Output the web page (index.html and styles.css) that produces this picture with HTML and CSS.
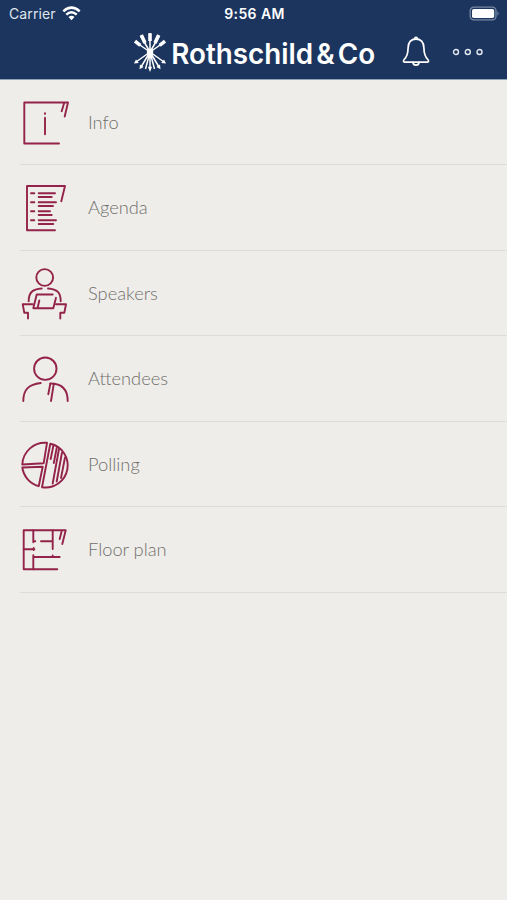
FILE: index.html
```html
<!DOCTYPE html>
<html lang="en">
<head>
    <meta charset="UTF-8">
    <meta name="viewport" content="width=device-width, initial-scale=1.0">
    <title>Rothschild &amp; Co</title>
    <link rel="stylesheet" href="styles.css">
</head>
<body>
    <header>
        <div class="status-bar">
            <div class="carrier">
                <span>Carrier</span>
                <svg class="wifi" width="19" height="15" viewBox="0 0 19 15">
                    <path d="M1.3 5.4Q9.5 -2 17.7 5.4" stroke-width="2.6"/>
                    <path d="M4.3 8.6Q9.5 4 14.7 8.6" stroke-width="2.5"/>
                    <path class="solid" d="M6.5 11Q9.5 8.5 12.5 11L9.5 14.2Z"/>
                </svg>
            </div>
            <span class="time">9:56 AM</span>
            <svg class="battery" width="31" height="16" viewBox="0 0 31 16">
                <rect class="shell" x="1.2" y="1.2" width="25.8" height="12.6" rx="3.6"/>
                <rect class="charge" x="3" y="3" width="22.2" height="9" rx="1.8"/>
                <path class="cap" d="M28.4 5.3Q31 7.5 28.4 9.7Z"/>
            </svg>
        </div>
        <div class="nav-bar">
            <svg class="logo" width="256" height="46" viewBox="0 0 256 46">
                <g class="arrows">
                    <path d="M18 23L3.5 13M18 23L9 7.5M18 23V4M18 23L27 7.5M18 23L32.5 13"/>
                    <path d="M18 23L4 33M18 23L9 38M18 23L13.5 40M18 23V41M18 23L22.5 40M18 23L27 38M18 23L32 33"/>
                    <path class="feather" d="M8.3 16.3L3 12.2M13 14L9.3 6M18 12V4.3M23 14L26.7 6M27.7 16.3L33 12.2"/>
                    <path class="tip" d="M2 34.6L4 30.4L6.8 34ZM7.5 40.2L8 35.4L11.6 38ZM15.9 37.8L18 43L20.1 37.8ZM28.5 40.2L28 35.4L24.4 38ZM34 34.6L32 30.4L29.2 34Z"/>
                    <circle class="tip" cx="18" cy="23" r="3.2"/>
                </g>
                <text x="39.2" y="35.2" textLength="204" lengthAdjust="spacingAndGlyphs">Rothschild &amp; Co</text>
            </svg>
            <svg class="bell" width="28" height="32" viewBox="0 0 28 32">
                <path d="M14 3.2C8.6 3.2 6.2 7.2 6.1 12C6 18 5.2 20.8 1.8 24Q0.8 26.2 3 26.2H25Q27.2 26.2 26.2 24C22.8 20.8 22 18 21.9 12C21.8 7.2 19.4 3.2 14 3.2Z"/>
                <path d="M12.6 3.1V2.2Q14 0.4 15.4 2.2V3.1M11 26.4Q11.2 29.2 14 29.2Q16.8 29.2 17 26.4"/>
            </svg>
            <svg class="more" width="32" height="8" viewBox="0 0 32 8">
                <circle cx="4" cy="4" r="2.5"/>
                <circle cx="15.8" cy="4" r="2.5"/>
                <circle cx="27.5" cy="4" r="2.5"/>
            </svg>
        </div>
    </header>

    <nav class="menu">
        <a class="item">
            <svg width="60" height="60" viewBox="0 0 60 60">
                <path d="M44 51.5H9.3V10.5H53L49.7 24.5M49.3 10.5L46.7 19.2M30 25.8V42.2M30 21.2V21.9"/>
            </svg>
            <span>Info</span>
        </a>
        <a class="item">
            <svg width="60" height="60" viewBox="0 0 60 60">
                <path d="M40 53.3H12V9H50L46.3 24.3"/>
                <path d="M16 16.3H19.3M16 25.3H19.3M16 34.3H19.3M16 43.3H19.3"/>
                <path d="M23.7 16.3H40M23.7 20H36.7M23.7 25.3H41M23.7 29H38M23.7 34.3H35M23.7 38H36.7M23.7 43.3H41M23.7 47H38.3"/>
            </svg>
            <span>Agenda</span>
        </a>
        <a class="item">
            <svg width="60" height="60" viewBox="0 0 60 60">
                <circle cx="29.7" cy="14.5" r="8.4"/>
                <path d="M26.7 25.5C17 26 13.7 30 13.7 38.2M33 25.5C42.5 26 45.7 30 45.7 38.2"/>
                <path d="M37.7 31.5H21.7L18.3 45.2H38.3L41 34.8M24.3 37.5L22.7 44.5"/>
                <path d="M17.7 41.2H7.7L9.3 49.8H13V55.5M41 41.2H51L49.3 49.8H45.3V55.5"/>
            </svg>
            <span>Speakers</span>
        </a>
        <a class="item">
            <svg width="60" height="60" viewBox="0 0 60 60">
                <circle cx="30.3" cy="20.7" r="11.2"/>
                <path d="M25.7 35C14 36.5 8.3 41 8.3 53M35.3 35.5C47 35.5 52.7 41 52.7 53"/>
                <path d="M35.3 35.7L33.3 46.3M38.7 36.3L36 53"/>
            </svg>
            <span>Attendees</span>
        </a>
        <a class="item">
            <svg width="60" height="60" viewBox="0 0 60 60">
                <path d="M7.3 30.5A22.7 22.7 0 0 1 32 8.8L28.7 29.2Z"/>
                <path d="M7.3 33.5L27.7 32.8L23.7 52.2A22.7 22.7 0 0 1 7.3 33.5Z"/>
                <path d="M35.3 9.8A22.1 22.1 0 0 1 27 53.2Z"/>
                <path d="M38.3 12L35.7 25M41.7 14L38.8 29M44 15L37.7 49.5M47 18.5L41.7 47.5M50 23.5L46 44"/>
            </svg>
            <span>Polling</span>
        </a>
        <a class="item">
            <svg width="60" height="60" viewBox="0 0 60 60">
                <path d="M42.3 50.3H8.7V11.3H50.7L47.3 25M46.7 12L44.7 20"/>
                <path d="M18.3 11.3V23.3M18.3 22.3H20.3M26 22.3H37.7M37.7 11.3V30M8.7 30.3H19.3M18.7 29V31"/>
                <path d="M18.3 50.3V36.3M18.3 38H44.7M37.7 36.5V38"/>
            </svg>
            <span>Floor plan</span>
        </a>
    </nav>
</body>
</html>
```
FILE: styles.css
```css
body {
    margin: 0;
    min-height: 100vh;
    background: #eeede9;
    font-family: Lato, sans-serif;
}
svg {
    display: block;
    flex: none;
    fill: none;
    overflow: visible;
    stroke-linecap: round;
    stroke-linejoin: round;
}
header {
    height: 79.6px;
    box-sizing: border-box;
    background: #1c355e;
    border-bottom: 1px solid #8fa3b5;
    color: #fff;
}

/* status bar */
.status-bar {
    display: grid;
    grid-template-columns: 1fr auto 1fr;
    align-items: center;
    height: 27px;
    padding: 0 7px 0 9px;
    font-family: Inter, sans-serif;
    font-size: 14px;
}
.carrier {
    display: flex;
    align-items: center;
    gap: 6px;
    color: #dfe5ee;
}
.carrier span {
    letter-spacing: 0.1px;
}
.wifi {
    stroke: #fff;
    stroke-linecap: butt;
}
.wifi .solid {
    fill: #fff;
    stroke: none;
}
.time {
    font-weight: 600;
    letter-spacing: 0.4px;
}
.battery {
    justify-self: end;
}
.shell {
    stroke: #7788a3;
    stroke-width: 1.3;
}
.charge {
    fill: #fff;
}
.cap {
    fill: #7788a3;
}

/* logo and buttons */
.nav-bar {
    display: flex;
    align-items: center;
    height: 50px;
    padding-left: 132px;
}
.arrows {
    stroke: #fff;
    stroke-width: 1.5;
    stroke-linecap: butt;
}
.feather {
    stroke-width: 3.6;
}
.tip {
    fill: #fff;
    stroke: none;
}
.logo text {
    fill: #fff;
    font-family: Inter, sans-serif;
    font-size: 28.5px;
    font-weight: 600;
    word-spacing: -4px;
}
.bell {
    margin-left: 14px;
    stroke: #fff;
    stroke-width: 1.7;
}
.more {
    margin-left: 22px;
    stroke: #e4e9f1;
    stroke-width: 1.4;
}

/* menu */
.item {
    display: flex;
    align-items: center;
    height: 85.5px;
    margin-left: 20px;
    box-sizing: border-box;
    border-bottom: 1px solid #dddcd8;
    color: #716f6d;
    font-size: 18.3px;
    font-weight: 300;
}
.item svg {
    margin: 0 13px 0 -5px;
    stroke: #93234a;
    stroke-width: 1.9;
}
```
